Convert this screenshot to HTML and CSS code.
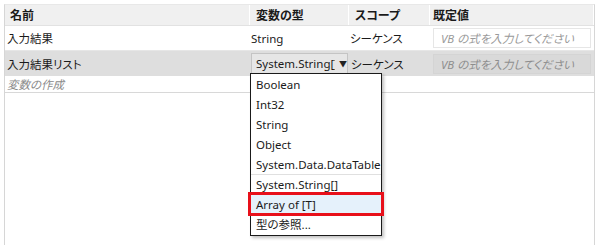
FILE: index.html
```html
<!DOCTYPE html>
<html lang="ja">
<head>
<meta charset="utf-8">
<link rel="stylesheet" href="styles.css">
</head>
<body>
<div class="panel">
  <div class="row header">
    <div class="cell c1">名前</div>
    <div class="cell c2">変数の型</div>
    <div class="cell c3">スコープ</div>
    <div class="cell c4">既定値</div>
  </div>
  <div class="row r1">
    <div class="cell c1">入力結果</div>
    <div class="cell c2">String</div>
    <div class="cell c3">シーケンス</div>
    <div class="cell c4"><div class="input">VB の式を入力してください</div></div>
  </div>
  <div class="row r2">
    <div class="cell c1">入力結果リスト</div>
    <div class="cell c2"><div class="combo"><span class="combo-text">System.String[]</span><span class="arrow">▼</span></div></div>
    <div class="cell c3">シーケンス</div>
    <div class="cell c4"><div class="input gray">VB の式を入力してください</div></div>
  </div>
  <div class="row r3">
    <div class="cell create">変数の作成</div>
  </div>
</div>
<div class="dropdown">
  <div class="item">Boolean</div>
  <div class="item">Int32</div>
  <div class="item">String</div>
  <div class="item">Object</div>
  <div class="item sep">System.Data.DataTable</div>
  <div class="item">System.String[]</div>
  <div class="item hl">Array of [T]</div>
  <div class="item">型の参照...</div>
</div>
<div class="redbox"></div>
</body>
</html>
```
FILE: styles.css
```css
html, body {
  margin: 0;
  padding: 0;
  background: #ffffff;
  width: 605px;
  height: 245px;
  overflow: hidden;
  font-family: "Noto Sans", "Noto Sans CJK JP", sans-serif;
  font-size: 11.5px;
  font-feature-settings: "palt";
  color: #1a1a1a;
}
.panel {
  margin: 4px 0 0 4px;
  width: 591px;
  height: 241px;
  border-left: 1px solid #d6d6d6;
  border-right: 1px solid #d6d6d6;
  box-sizing: border-box;
  border-top: 1px solid #e8e8e8;
}
.row {
  display: grid;
  grid-template-columns: 245px 99px 81px 1fr;
  box-sizing: border-box;
}
.cell {
  display: flex;
  align-items: center;
  white-space: nowrap;
  overflow: hidden;
  box-sizing: border-box;
}
.header {
  height: 21px;
  background: #f0f0f0;
  border-bottom: 1px solid #e2e2e2;
}
.header .cell {
  padding-left: 6px;
  font-weight: 600;
  font-size: 12px;
  border-right: 1px solid #ffffff;
  height: 20px;
}
.header .c1 { padding-left: 5px; }
.r1 {
  height: 25px;
  background: #ffffff;
  border-bottom: 1px solid #e6e6e6;
}
.r1 .cell { padding-left: 2px; }
.r1 .c2, .r1 .c3 { padding-left: 1px; }
.r2 {
  height: 25px;
  background: #dedede;
}
.r2 .cell { padding-left: 2px; }
.r2 .c2 { padding-left: 1px; }
.r2 .c3 { padding-left: 2px; }
.c4 { padding-left: 3px !important; padding-right: 3px; }
.input {
  width: 158px;
  height: 20px;
  line-height: 20px;
  box-sizing: border-box;
  border: 1px solid #e6e6e6;
  background: #ffffff;
  color: #9a9a9a;
  font-style: italic;
  padding-left: 7px;
  overflow: hidden;
  white-space: nowrap;
}
.input.gray {
  background: #d9d9d9;
  border-color: #d4d4d4;
  color: #8e8e8e;
}
.combo {
  width: 97px;
  height: 22px;
  box-sizing: border-box;
  border: 1px solid #c4c4c4;
  background: #e6e6e6;
  display: flex;
  align-items: center;
  padding-left: 4px;
}
.combo-text {
  width: 79px;
  flex: none;
  overflow: hidden;
  white-space: nowrap;
  text-overflow: clip;
}
.arrow {
  font-size: 8px;
  margin-left: 4px;
  color: #222;
}
.r3 {
  display: block;
  height: 17px;
  border-bottom: 1px solid #d8d8d8;
}
.create {
  height: 16px;
  padding-left: 2px;
  color: #8a8a8a;
  font-style: italic;
}
.dropdown {
  position: absolute;
  left: 250px;
  top: 73px;
  width: 132px;
  box-sizing: border-box;
  border: 1px solid #1a1a1a;
  background: #ffffff;
  box-shadow: 2px 2px 3px rgba(0,0,0,0.25);
  padding: 1px 0 0 0;
}
.item {
  height: 20px;
  line-height: 20px;
  padding-left: 5px;
  white-space: nowrap;
  box-sizing: border-box;
}
.item.sep {
  border-bottom: 1px solid #e0e0e0;
}
.item.hl {
  background: #e5f1fb;
}
.redbox {
  position: absolute;
  left: 248px;
  top: 192px;
  width: 136px;
  height: 24px;
  box-sizing: border-box;
  border: 3px solid #e8101a;
}
```
